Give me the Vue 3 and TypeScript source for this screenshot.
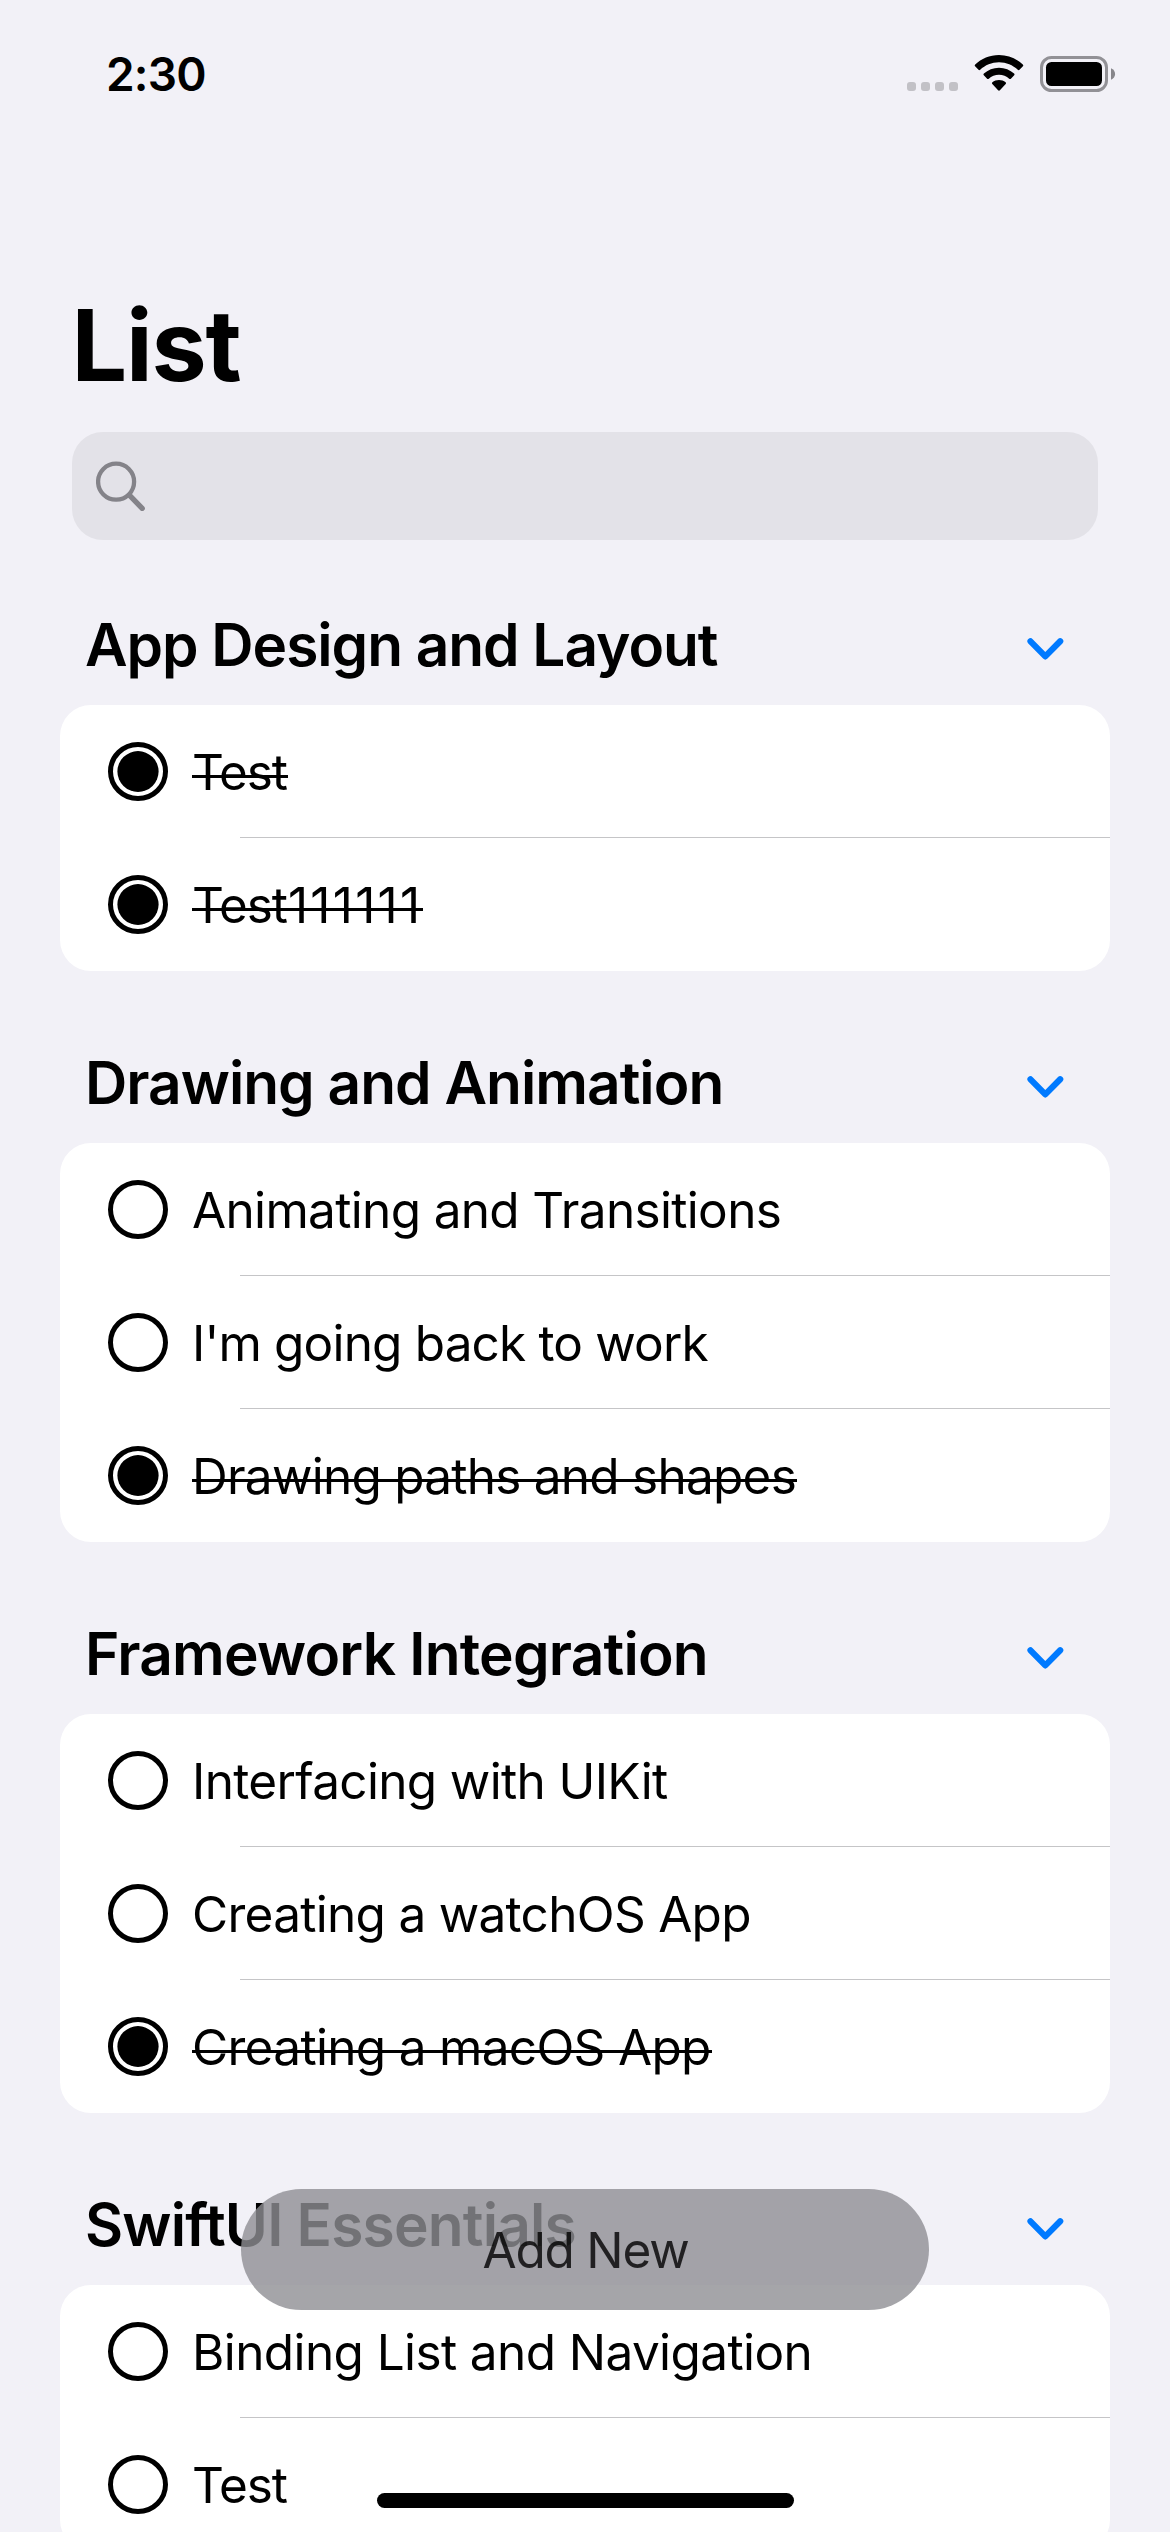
<script setup lang="ts">
interface Item {
  text: string
  digits?: string
  done: boolean
  tracking: number
}

interface Section {
  title: string
  tracking: number
  items: Item[]
}

const sections: Section[] = [
  {
    title: 'App Design and Layout',
    tracking: -1.05,
    items: [
      { text: 'Test', done: true, tracking: -1.1 },
      { text: 'Test', digits: '111111', done: true, tracking: -1.1 },
    ],
  },
  {
    title: 'Drawing and Animation',
    tracking: -0.99,
    items: [
      { text: 'Animating and Transitions', done: false, tracking: -0.66 },
      { text: "I'm going back to work", done: false, tracking: -0.83 },
      { text: 'Drawing paths and shapes', done: true, tracking: -0.75 },
    ],
  },
  {
    title: 'Framework Integration',
    tracking: -0.8,
    items: [
      { text: 'Interfacing with UIKit', done: false, tracking: -0.65 },
      { text: 'Creating a watchOS App', done: false, tracking: -0.71 },
      { text: 'Creating a macOS App', done: true, tracking: -0.68 },
    ],
  },
  {
    title: 'SwiftUI Essentials',
    tracking: -0.81,
    items: [
      { text: 'Binding List and Navigation', done: false, tracking: -0.6 },
      { text: 'Test', done: false, tracking: -1.1 },
    ],
  },
]
</script>

<template>
  <div class="screen">
    <header class="status">
      <span class="time">2:30</span>
      <div class="indicators">
        <svg class="signal" width="51" height="9" viewBox="0 0 51 9">
          <rect v-for="n in 4" :key="n" :x="(n - 1) * 14" y="0" width="9" height="9" rx="3" fill="#c2c1c6" />
        </svg>
        <svg class="wifi" width="50" height="38" viewBox="0 0 50 38">
          <path d="M25 1C34.3 1 42.7 4.6 48.8 10.5C49.4 11.1 49.4 11.7 48.9 12.2L45.5 15.8C45 16.3 44.4 16.3 43.8 15.8C38.9 11.2 32.3 8.3 25 8.3S11.1 11.2 6.2 15.8C5.6 16.3 5 16.3 4.5 15.8L1.1 12.2C.6 11.7 .6 11.1 1.2 10.5C7.3 4.6 15.7 1 25 1Z" />
          <path d="M25 13.7C30.8 13.7 36.1 15.9 40.1 19.5C40.7 20.1 40.7 20.7 40.2 21.2L36.9 24.7C36.4 25.2 35.8 25.2 35.2 24.7C32.5 22.3 28.9 20.8 25 20.8S17.5 22.3 14.8 24.7C14.2 25.2 13.6 25.2 13.1 24.7L9.8 21.2C9.3 20.7 9.3 20.1 9.9 19.5C13.9 15.9 19.2 13.7 25 13.7Z" />
          <path d="M25 26C27.5 26 29.8 26.9 31.6 28.3C32.2 28.8 32.2 29.5 31.7 30L25.9 36.2C25.4 36.8 24.6 36.8 24.1 36.2L18.3 30C17.8 29.5 17.8 28.8 18.4 28.3C20.2 26.9 22.5 26 25 26Z" />
        </svg>
        <svg class="battery" width="76" height="36" viewBox="0 0 76 36">
          <rect x="1.5" y="1.5" width="65" height="33" rx="10" fill="none" stroke="#929196" stroke-width="3" />
          <rect x="6" y="6" width="56" height="24" rx="5.5" fill="#000" />
          <path d="M71 12.2C73.5 13.2 75.1 15.4 75.1 18S73.5 22.8 71 23.8Z" fill="#87868b" />
        </svg>
      </div>
    </header>

    <h1 class="title">List</h1>

    <div class="search">
      <svg width="50" height="50" viewBox="0 0 50 50" fill="none" stroke="#848389" stroke-linecap="round">
        <circle cx="20.1" cy="20.7" r="18" stroke-width="4.3" />
        <path d="M33.6 34.3L46.2 47.4" stroke-width="5.3" />
      </svg>
    </div>

    <main class="list">
      <section v-for="section in sections" :key="section.title" class="section">
        <div class="heading">
          <h2 :style="{ letterSpacing: section.tracking + 'px' }">{{ section.title }}</h2>
          <svg class="chevron" width="37" height="23" viewBox="0 0 37 23">
            <path d="M3.5 3.3L18.3 18.4L33.2 3.3" fill="none" stroke="#007aff" stroke-width="6.2" stroke-linecap="round" stroke-linejoin="round" />
          </svg>
        </div>
        <div class="card">
          <div v-for="(item, i) in section.items" :key="i" class="row">
            <svg class="radio" width="60" height="60" viewBox="0 0 60 60">
              <ellipse cx="30" cy="29.5" rx="27.5" ry="27" fill="none" stroke="#000" stroke-width="5" />
              <ellipse v-if="item.done" cx="30" cy="29.5" rx="20.6" ry="20.4" />
            </svg>
            <span class="label" :class="{ done: item.done }" :style="{ letterSpacing: item.tracking + 'px' }">{{ item.text }}<span v-if="item.digits" class="digits">{{ item.digits }}</span></span>
          </div>
        </div>
      </section>
    </main>

    <button class="add" type="button">Add New</button>
    <div class="home"></div>
  </div>
</template>

<style>
body {
  margin: 0;
  background: #f2f1f7;
}
</style>

<style scoped>
.screen {
  position: relative;
  width: 1170px;
  height: 2532px;
  overflow: hidden;
  background: #f2f1f7;
  color: #000;
  font-family: Inter, "Liberation Sans", sans-serif;
}

.status {
  display: flex;
  justify-content: space-between;
  height: 102px;
}

.time {
  margin: 46px 0 0 106px;
  font-size: 46px;
  font-weight: 600;
  line-height: 56px;
  letter-spacing: -0.8px;
}

.indicators {
  display: flex;
  align-items: flex-start;
  margin-right: 54px;
}

.signal {
  margin-top: 82px;
}

.wifi {
  margin: 54px 0 0 16px;
}

.battery {
  margin: 56px 0 0 16px;
}

.title {
  margin: 183px 0 0 71.5px;
  font-size: 98.6px;
  font-weight: 700;
  line-height: 120px;
  letter-spacing: -1.2px;
}

.search {
  display: flex;
  align-items: flex-start;
  box-sizing: border-box;
  height: 108px;
  margin: 27px 72px 0;
  padding: 29px 24px;
  border-radius: 31px;
  background: #e3e2e8;
}

.list {
  margin: 69px 60px 0;
}

.section + .section {
  margin-top: 76px;
}

.heading {
  display: flex;
  justify-content: space-between;
  align-items: flex-start;
  height: 96px;
  padding: 0 46px 0 25px;
}

.heading h2 {
  margin: 0;
  font-size: 58.6px;
  font-weight: 600;
  line-height: 71px;
  white-space: nowrap;
}

.chevron {
  margin-top: 29px;
}

.card {
  overflow: hidden;
  border-radius: 31px;
  background: #fff;
}

.row {
  display: flex;
  align-items: flex-start;
  box-sizing: border-box;
  height: 133px;
  padding-left: 48px;
}

.row:not(:last-child) {
  background: linear-gradient(#c5c5c7, #c5c5c7) 180px 132px / 870px 1px no-repeat;
}

.radio {
  margin: 37px 24px 0 0;
}

.label {
  position: relative;
  margin-top: 37px;
  font-size: 49.5px;
  line-height: 60px;
  white-space: nowrap;
}

.label.done::after {
  content: "";
  position: absolute;
  top: 33px;
  left: 0;
  right: -1px;
  height: 3px;
  background: #000;
}

.digits {
  margin-left: 1px;
  letter-spacing: 2.3px;
}

.add {
  position: absolute;
  top: 2189px;
  left: 241px;
  width: 688px;
  height: 121px;
  padding: 0 0 0 1px;
  border: 0;
  border-radius: 60.5px;
  background: rgba(143, 142, 147, 0.8);
  color: rgba(0, 0, 0, 0.8);
  font-family: inherit;
  font-size: 49.5px;
  line-height: 60px;
  letter-spacing: -1.2px;
}

.home {
  position: absolute;
  top: 2493px;
  left: 377px;
  width: 417px;
  height: 15px;
  border-radius: 7.5px;
  background: #000;
}
</style>
